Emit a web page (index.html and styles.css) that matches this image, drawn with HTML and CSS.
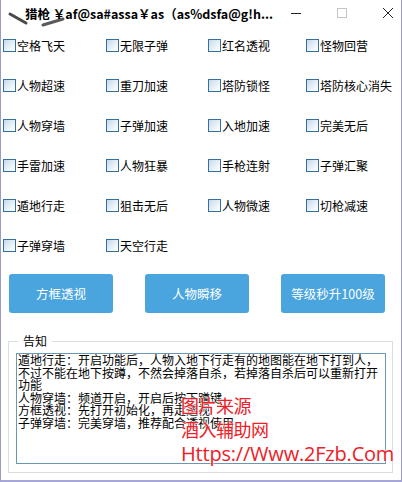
FILE: index.html
```html
<!DOCTYPE html>
<html lang="zh-CN">
<head>
<meta charset="utf-8">
<title>猎枪</title>
<link rel="stylesheet" href="styles.css">
</head>
<body>
<div class="window">
  <div class="titlebar">
    <svg class="app-icon" width="70" height="29" viewBox="0 0 70 29">
      <line x1="9" y1="14" x2="25" y2="23" stroke="#4a4a4a" stroke-width="3" stroke-linecap="round"/>
      <line x1="42" y1="25" x2="62" y2="19" stroke="#5a5a5a" stroke-width="3" stroke-linecap="round"/>
    </svg>
    <div class="title">猎枪 ￥af@sa#assa￥as（as%dsfa@g!h...</div>
    <div class="controls">
      <span class="ctl"><svg width="12" height="12" viewBox="0 0 12 12"><line x1="1" y1="6.5" x2="11" y2="6.5" stroke="#222" stroke-width="1"/></svg></span>
      <span class="ctl"><svg width="12" height="12" viewBox="0 0 12 12"><rect x="1.5" y="1.5" width="9" height="9" fill="none" stroke="#c4c4c4" stroke-width="1"/></svg></span>
      <span class="ctl"><svg width="12" height="12" viewBox="0 0 12 12"><line x1="1" y1="1" x2="11" y2="11" stroke="#222" stroke-width="1"/><line x1="11" y1="1" x2="1" y2="11" stroke="#222" stroke-width="1"/></svg></span>
    </div>
  </div>

  <div class="options">
    <label class="opt"><span class="box"></span>空格飞天</label>
    <label class="opt"><span class="box"></span>无限子弹</label>
    <label class="opt"><span class="box"></span>红名透视</label>
    <label class="opt"><span class="box"></span>怪物回营</label>
    <label class="opt"><span class="box"></span>人物超速</label>
    <label class="opt"><span class="box"></span>重刀加速</label>
    <label class="opt"><span class="box"></span>塔防锁怪</label>
    <label class="opt"><span class="box"></span>塔防核心消失</label>
    <label class="opt"><span class="box"></span>人物穿墙</label>
    <label class="opt"><span class="box"></span>子弹加速</label>
    <label class="opt"><span class="box"></span>入地加速</label>
    <label class="opt"><span class="box"></span>完美无后</label>
    <label class="opt"><span class="box"></span>手雷加速</label>
    <label class="opt"><span class="box"></span>人物狂暴</label>
    <label class="opt"><span class="box"></span>手枪连射</label>
    <label class="opt"><span class="box"></span>子弹汇聚</label>
    <label class="opt"><span class="box"></span>遁地行走</label>
    <label class="opt"><span class="box"></span>狙击无后</label>
    <label class="opt"><span class="box"></span>人物微速</label>
    <label class="opt"><span class="box"></span>切枪减速</label>
    <label class="opt"><span class="box"></span>子弹穿墙</label>
    <label class="opt"><span class="box"></span>天空行走</label>
  </div>

  <div class="buttons">
    <button class="btn">方框透视</button>
    <button class="btn">人物瞬移</button>
    <button class="btn">等级秒升100级</button>
  </div>

  <fieldset class="notice">
    <legend>告知</legend>
    <div class="memo">
      <div class="line">遁地行走：开启功能后，人物入地下行走有的地图能在地下打到人，</div>
      <div class="line">不过不能在地下按蹲，不然会掉落自杀，若掉落自杀后可以重新打开</div>
      <div class="line">功能</div>
      <div class="line">人物穿墙：频道开启，开启后按下蹲键</div>
      <div class="line">方框透视：先打开初始化，再走透视</div>
      <div class="line">子弹穿墙：完美穿墙，推荐配合透视使用</div>
      <div class="wm">
        <div class="wm-cn">图片来源</div>
        <div class="wm-cn">酒入辅助网</div>
        <div class="wm-url">Https://Www.2Fzb.Com</div>
      </div>
    </div>
  </fieldset>
</div>
</body>
</html>
```

FILE: styles.css
```css
* { box-sizing: border-box; }

html, body {
  margin: 0;
  padding: 0;
  background: #ffffff;
}

body {
  font-family: "Noto Sans CJK SC", "Noto Sans", sans-serif;
  color: #000;
}

.window {
  width: 402px;
  height: 482px;
  border: 1px solid #9a9ad0;
  border-top: none;
  border-bottom: 2px solid #a6a6d8;
  background: #fff;
  overflow: hidden;
}

.titlebar {
  position: relative;
  height: 29px;
  display: flex;
  align-items: center;
}

.app-icon {
  position: absolute;
  left: 0;
  top: 0;
}

.title {
  position: relative;
  padding-left: 24px;
  font-size: 12.5px;
  font-weight: bold;
  line-height: 14px;
  margin-top: -2px;
  white-space: nowrap;
}

.controls {
  margin-left: auto;
  display: flex;
  align-self: stretch;
}

.ctl {
  width: 46px;
  display: flex;
  align-items: center;
  justify-content: center;
  padding-bottom: 4px;
}

.options {
  display: grid;
  grid-template-columns: 103px 102px 98px 1fr;
  row-gap: 27px;
  padding: 10px 0 0 2px;
}

.opt {
  display: flex;
  align-items: center;
  height: 13px;
  font-size: 12px;
  line-height: 13px;
  gap: 1px;
  white-space: nowrap;
}

.box {
  width: 13px;
  height: 13px;
  flex: none;
  border: 1px solid #33709e;
  background: linear-gradient(135deg, #c6d9ea 0%, #e8f0f7 55%, #ffffff 100%);
}

.buttons {
  display: flex;
  gap: 32px;
  padding-left: 8px;
  margin-top: 22px;
}

.btn {
  width: 104px;
  height: 39px;
  border: none;
  border-radius: 3px;
  background: #4aa5df;
  color: #fff;
  font-family: "Noto Sans CJK SC", sans-serif;
  font-size: 12.5px;
  padding: 0;
}

.notice {
  margin: 21px 0 0 7px;
  width: 385px;
  min-inline-size: 0;
  border: 1px solid #d8dde2;
  padding: 0 0 8px 7px;
}

.notice legend {
  font-size: 12px;
  line-height: 14px;
  padding: 0 5px;
  margin-left: 2px;
}

.memo {
  position: relative;
  margin-top: 5px;
  width: 370px;
  height: 111px;
  border: 1px solid #6a97b4;
  padding: 0 1px;
  font-size: 12px;
  line-height: 12.5px;
  white-space: nowrap;
}

.line {
  height: 12.5px;
}

.wm {
  position: absolute;
  left: 164px;
  top: 39px;
  color: #ee2027;
  text-shadow: 0 0 2px #fff, 0 0 2px #fff;
}

.wm-cn {
  font-size: 18px;
  line-height: 24px;
  letter-spacing: -0.5px;
}

.wm-url {
  font-family: "Open Sans", "Noto Sans", sans-serif;
  font-size: 20px;
  line-height: 26px;
  letter-spacing: -0.2px;
}
```
